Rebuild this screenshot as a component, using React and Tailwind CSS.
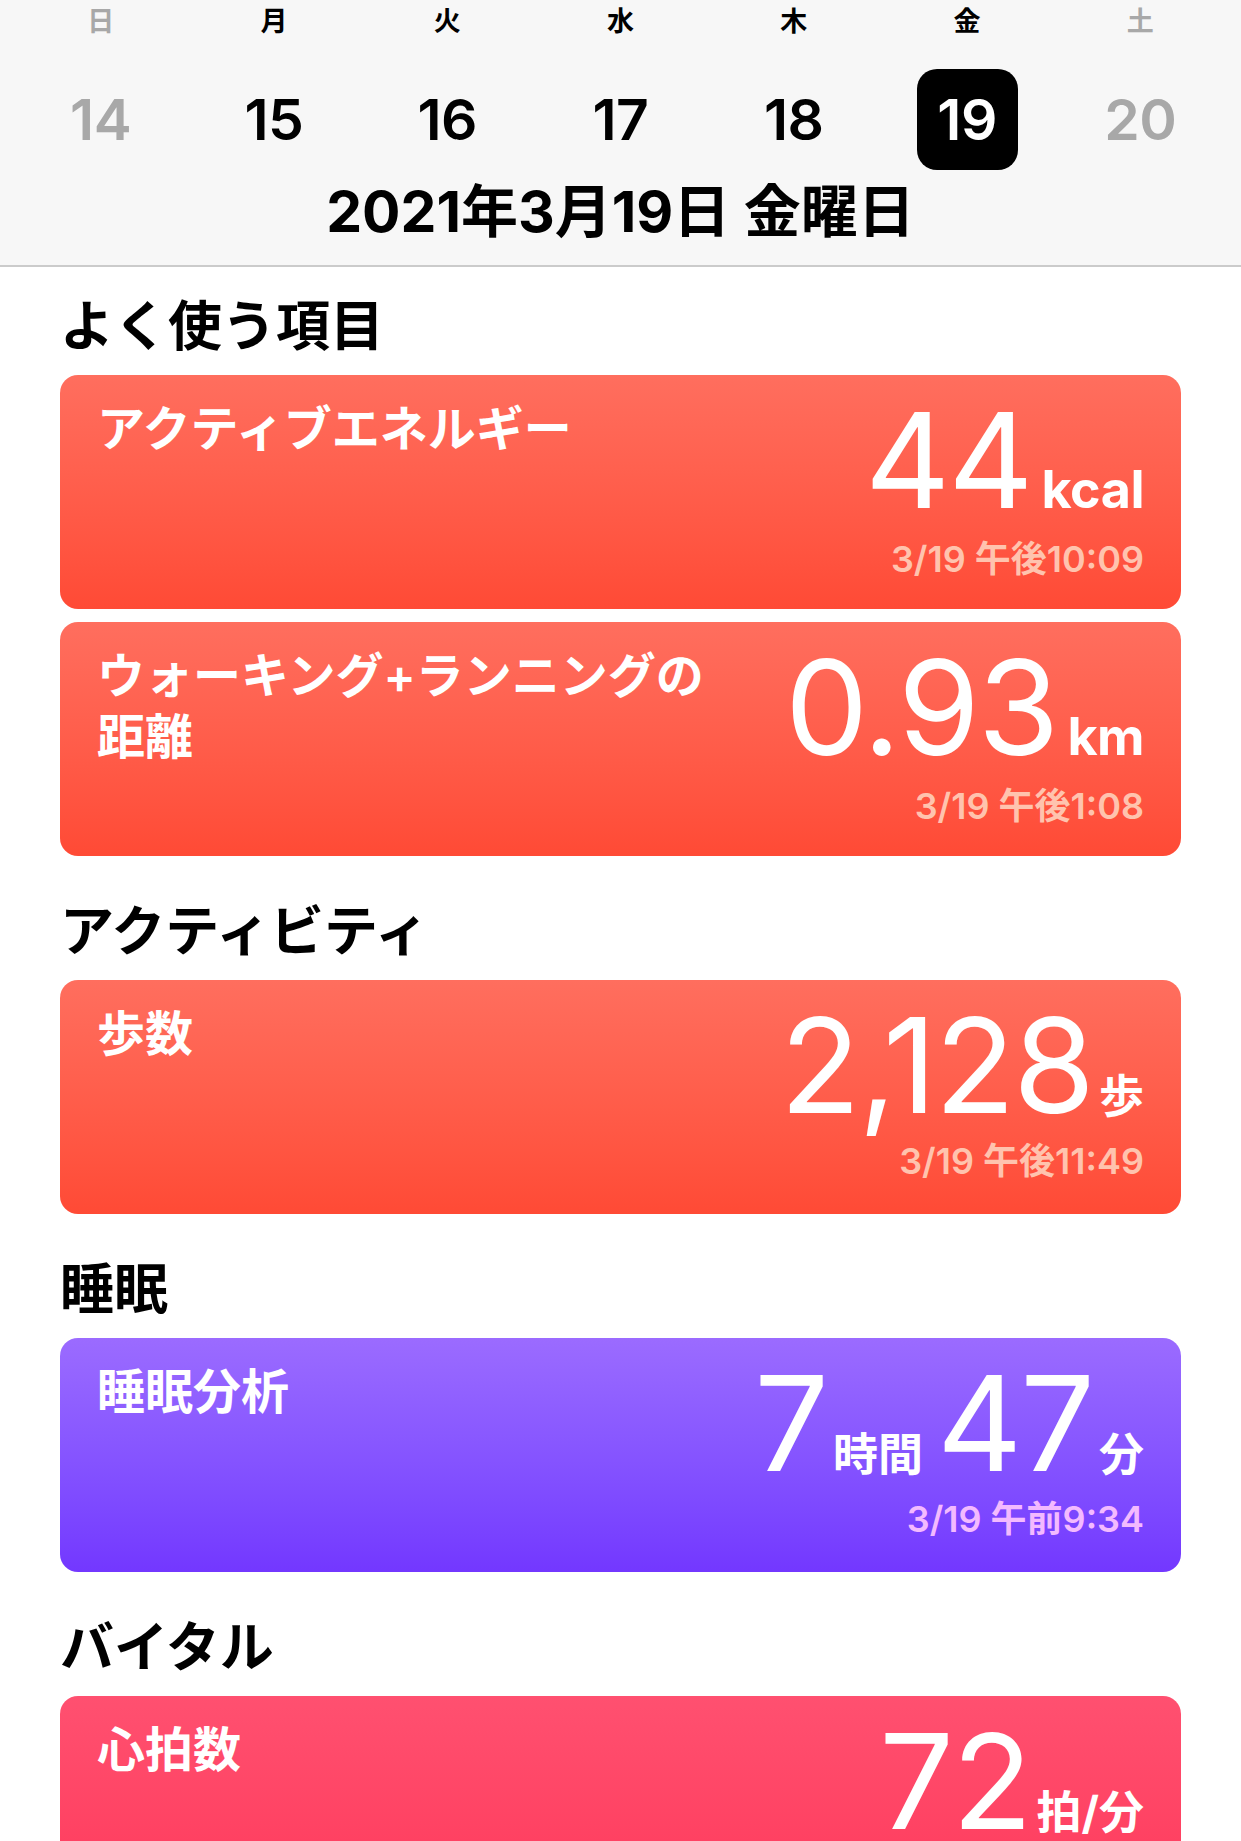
const days = [
  { w: "日", d: "14", muted: true },
  { w: "月", d: "15" },
  { w: "火", d: "16" },
  { w: "水", d: "17" },
  { w: "木", d: "18" },
  { w: "金", d: "19", selected: true },
  { w: "土", d: "20", muted: true },
];

const sections = [
  {
    heading: "よく使う項目",
    cards: [
      { title: "アクティブエネルギー", parts: [{ v: "44" }, { u: "kcal" }], time: "3/19 午後10:09", tone: "red" },
      { title: "ウォーキング+ランニングの距離", parts: [{ v: "0.93" }, { u: "km" }], time: "3/19 午後1:08", tone: "red" },
    ],
  },
  {
    heading: "アクティビティ",
    cards: [{ title: "歩数", parts: [{ v: "2,128" }, { u: "歩", cjk: true }], time: "3/19 午後11:49", tone: "red" }],
  },
  {
    heading: "睡眠",
    cards: [
      {
        title: "睡眠分析",
        parts: [{ v: "7" }, { u: "時間", cjk: true }, { v: "47" }, { u: "分", cjk: true }],
        time: "3/19 午前9:34",
        tone: "purple",
      },
    ],
  },
  {
    heading: "バイタル",
    cards: [{ title: "心拍数", parts: [{ v: "72" }, { u: "拍/分", cjk: true }], time: "3/19 午後10:41", tone: "pink" }],
  },
];

const tones = {
  red: { bg: "bg-gradient-to-b from-[#ff6e5e] to-[#ff4a35]", time: "text-[#ffc3ae]" },
  purple: { bg: "bg-gradient-to-b from-[#9b6bff] to-[#7337ff]", time: "text-[#f3baff]" },
  pink: { bg: "bg-gradient-to-b from-[#ff5070] to-[#ff3659]", time: "text-[#ffc0cc]" },
};

function Card({ card }) {
  const tone = tones[card.tone];
  return (
    <div className={`${tone.bg} rounded-[18px] h-[234px] flex justify-between pl-[37px] pr-[37px] pt-[19px] text-white`}>
      <div className="max-w-[630px] mt-[4px] text-[48px] leading-[61px] font-semibold">{card.title}</div>
      <div className="flex flex-col items-end">
        <div className="flex items-baseline">
          {card.parts.map((p, i) =>
            p.v ? (
              <span
                key={i}
                className={`text-[132px] leading-[132px] font-normal tracking-[-2px] ${i > 0 ? "ml-[14px]" : ""}`}
              >
                {p.v}
              </span>
            ) : (
              <span
                key={i}
                className={`font-bold ${p.cjk ? "ml-[6px] text-[45px]" : "ml-[10px] text-[52px] tracking-[-0.5px]"}`}
              >
                {p.u}
              </span>
            )
          )}
        </div>
        <div className={`${tone.time} mt-[10px] text-[36px] leading-[40px] font-semibold`}>{card.time}</div>
      </div>
    </div>
  );
}

export default function App() {
  return (
    <div className="bg-white min-h-screen font-[family-name:Inter,'Noto_Sans_CJK_JP',sans-serif]">
      {/* header with week strip */}
      <div className="bg-[#f7f7f7] border-b-2 border-[#cbcbcb] px-[14px] pt-[5px] pb-[23px]">
        <div className="grid grid-cols-7">
          {days.map((d) => (
            <div key={d.d} className="flex flex-col items-center">
              <div className={`text-[27px] leading-[34px] font-bold ${d.muted ? "text-[#a8a8a8]" : "text-black"}`}>{d.w}</div>
              <div
                className={`mt-[30px] w-[101px] h-[101px] rounded-[20px] flex items-center justify-center text-[57px] font-semibold tracking-[-0.5px] ${
                  d.selected ? "bg-black text-white font-bold" : d.muted ? "text-[#a8a8a8]" : "text-black"
                }`}
              >
                {d.d}
              </div>
            </div>
          ))}
        </div>
        <div className="mt-[12px] text-center text-[57px] leading-[60px] font-bold text-black">
          2021年3月19日 金曜日
        </div>
      </div>

      <div className="px-[60px] pt-[30px]">
        {sections.map((s, si) => (
          <div key={s.heading} className={si > 0 ? "mt-[46px]" : ""}>
            <div className="text-[54px] leading-[60px] font-bold text-black">{s.heading}</div>
            <div className="mt-[18px] flex flex-col gap-[13px]">
              {s.cards.map((c) => (
                <Card key={c.title} card={c} />
              ))}
            </div>
          </div>
        ))}
      </div>
    </div>
  );
}
